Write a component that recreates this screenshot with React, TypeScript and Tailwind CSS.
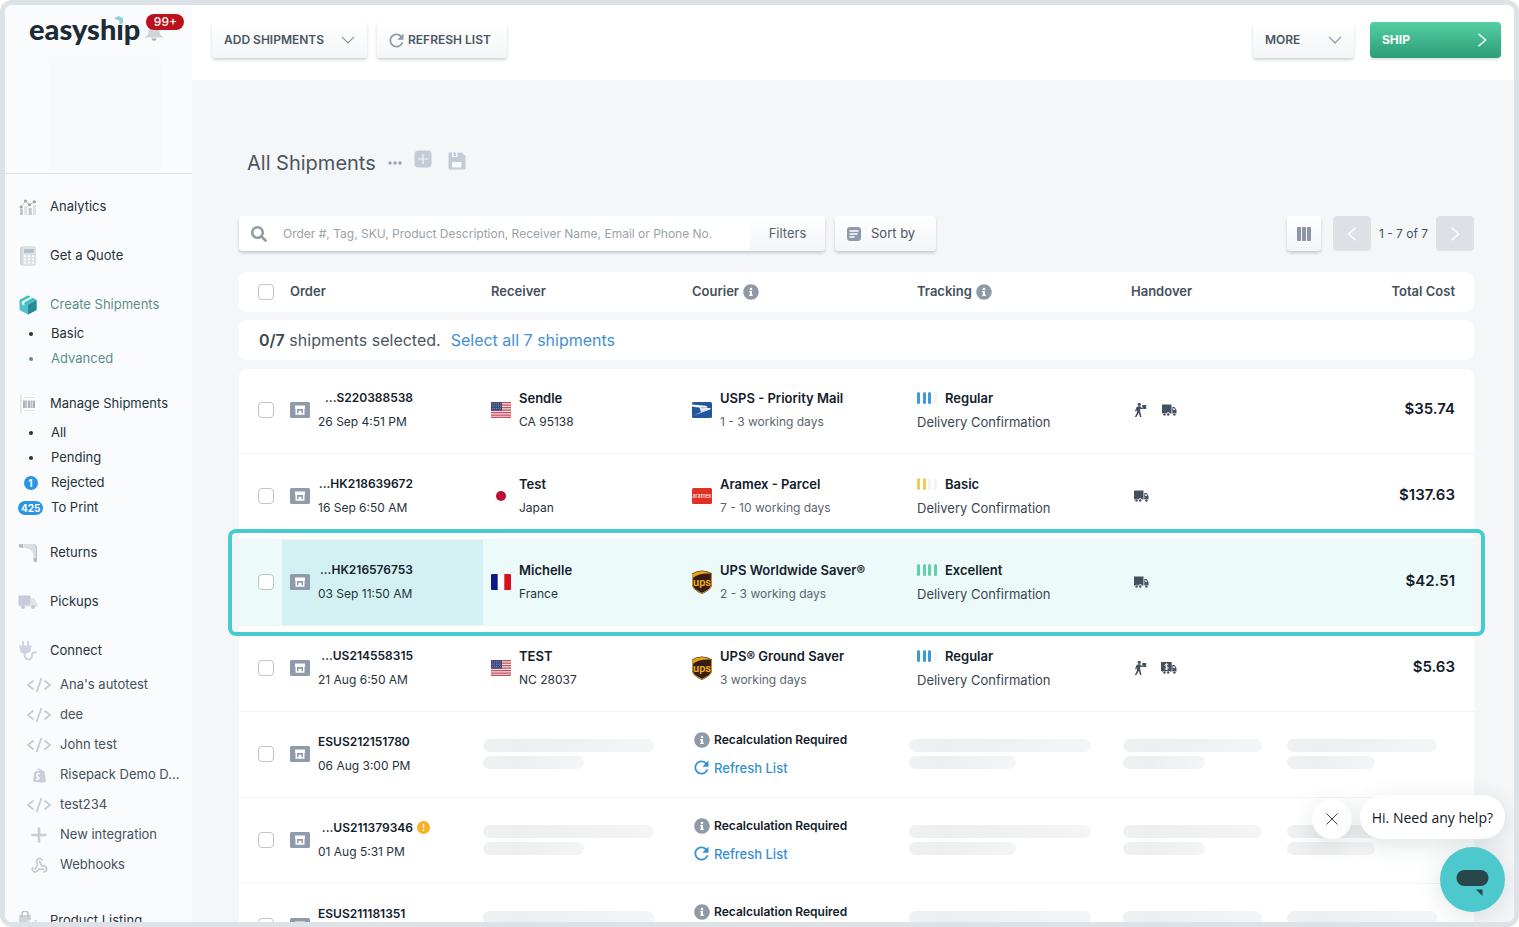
import type { ReactNode } from "react";
import { Webhook } from "lucide-react";
import { FaInfoCircle, FaSearch, FaShopify } from "react-icons/fa";
import { MdRefresh } from "react-icons/md";

type NavChild = {
  label: string;
  count?: string;
  active?: boolean;
};

type Shipment = {
  id: string;
  date?: string;
  warning?: boolean;
  highlighted?: boolean;
  details?: {
    name: string;
    place: string;
    flag: ReactNode;
    courier: string;
    days: string;
    logo: ReactNode;
    level: "Regular" | "Basic" | "Excellent";
    handover: ("dropoff" | "pickup" | "paid")[];
    cost: string;
  };
};

const shipments: Shipment[] = [
  {
    id: "...S220388538",
    date: "26 Sep 4:51 PM",
    details: {
      name: "Sendle",
      place: "CA 95138",
      flag: <UsFlag />,
      courier: "USPS - Priority Mail",
      days: "1 - 3 working days",
      logo: <UspsLogo />,
      level: "Regular",
      handover: ["dropoff", "pickup"],
      cost: "$35.74",
    },
  },
  {
    id: "...HK218639672",
    date: "16 Sep 6:50 AM",
    details: {
      name: "Test",
      place: "Japan",
      flag: <JapanFlag />,
      courier: "Aramex - Parcel",
      days: "7 - 10 working days",
      logo: <AramexLogo />,
      level: "Basic",
      handover: ["pickup"],
      cost: "$137.63",
    },
  },
  {
    id: "...HK216576753",
    date: "03 Sep 11:50 AM",
    highlighted: true,
    details: {
      name: "Michelle",
      place: "France",
      flag: <FranceFlag />,
      courier: "UPS Worldwide Saver®",
      days: "2 - 3 working days",
      logo: <UpsLogo />,
      level: "Excellent",
      handover: ["pickup"],
      cost: "$42.51",
    },
  },
  {
    id: "...US214558315",
    date: "21 Aug 6:50 AM",
    details: {
      name: "TEST",
      place: "NC 28037",
      flag: <UsFlag />,
      courier: "UPS® Ground Saver",
      days: "3 working days",
      logo: <UpsLogo />,
      level: "Regular",
      handover: ["dropoff", "paid"],
      cost: "$5.63",
    },
  },
  { id: "ESUS212151780", date: "06 Aug 3:00 PM" },
  { id: "...US211379346", date: "01 Aug 5:31 PM", warning: true },
  { id: "ESUS211181351" },
];

const createItems: NavChild[] = [
  { label: "Basic" },
  { label: "Advanced", active: true },
];

const manageItems: NavChild[] = [
  { label: "All" },
  { label: "Pending" },
  { label: "Rejected", count: "1" },
  { label: "To Print", count: "425" },
];

const integrations = [
  { label: "Ana's autotest", icon: <CodeIcon /> },
  { label: "dee", icon: <CodeIcon /> },
  { label: "John test", icon: <CodeIcon /> },
  { label: "Risepack Demo D...", icon: <FaShopify className="size-[15px]" /> },
  { label: "test234", icon: <CodeIcon /> },
  { label: "New integration", icon: <PlusIcon /> },
  { label: "Webhooks", icon: <Webhook size={17} strokeWidth={2.5} /> },
];

const buttonStyle =
  "flex items-center rounded bg-linear-to-b from-white to-[#f3f5f7] text-[#4b5661] shadow-[0_2px_3px_rgba(60,80,100,0.25)] cursor-pointer";

export default function App() {
  return (
    <div className="relative flex h-screen overflow-hidden rounded-xl border-[5px] border-[#dde2e7] bg-[#f4f6f8] font-['Inter','Liberation_Sans',sans-serif] text-[13px] text-[#26323c]">
      <Sidebar />
      <div className="flex min-w-0 flex-1 flex-col">
        <TopBar />
        <main className="min-h-0 flex-1 overflow-hidden pt-[67px] pr-10 pl-[47px]">
          <div className="flex h-8 items-center pl-2">
            <h1 className="text-[20px] text-[#4b5661]">All Shipments</h1>
            <button aria-label="View options" className="ml-3 cursor-pointer">
              <DotsIcon />
            </button>
            <button aria-label="Add view" className="mb-2 ml-3 cursor-pointer">
              <AddViewIcon />
            </button>
            <button aria-label="Save view" className="mb-1 ml-4 cursor-pointer">
              <SaveIcon />
            </button>
          </div>
          <Toolbar />
          <ShipmentTable />
        </main>
      </div>
      <ChatWidget />
    </div>
  );
}

function Sidebar() {
  return (
    <aside className="w-[187px] shrink-0 overflow-hidden bg-[#f9fbfc]">
      <div className="h-[169px] border-b border-[#dde2e7] pt-2">
        <div className="flex h-9 pl-6">
          <a
            href="#home"
            className="relative font-['Lato',sans-serif] text-[29px] leading-8 font-black text-[#1c2b36]"
          >
            easyship
            <svg
              viewBox="0 0 11 10"
              className="absolute top-0.5 right-4 h-2.5 w-[11px]"
            >
              <path d="M1 0h10v9H1z" fill="#f9fbfc" />
              <path d="M1 3.500l4.500-2.500L10 3v5L6.500 9.500V5.800z" fill="#8fd3d6" />
            </svg>
          </a>
          <button
            aria-label="Notifications"
            className="relative ml-1.5 h-8 w-10 cursor-pointer"
          >
            <svg
              viewBox="0 0 20 16"
              className="absolute bottom-1 -left-0.5 h-4 w-5"
              fill="#cfd4da"
            >
              <path d="M10 0C6 0 4.500 3 4.500 6.500 4.500 9.500 3 11 0 12.500h20c-3-1.500-4.500-3-4.500-6C15.500 3 14 0 10 0z" />
              <path d="M7.500 13.500h5a2.500 2.200 0 01-5 0z" fill="#a4adb6" />
            </svg>
            <span className="absolute top-px left-0 h-4 w-[38px] rounded-full bg-[#bb111a] text-center text-[12px] leading-4 font-medium text-white">
              99+
            </span>
          </button>
        </div>
        <div className="mt-2 ml-11 h-[116px] w-28 bg-[#f8f9fa]" />
      </div>

      <nav className="pt-4">
        <NavGroup label="Analytics" icon={<AnalyticsIcon />} />
        <NavGroup label="Get a Quote" icon={<CalculatorIcon />} />
        <NavGroup
          label="Create Shipments"
          icon={<BoxIcon />}
          items={createItems}
          active
        />
        <NavGroup
          label="Manage Shipments"
          icon={<BarcodeIcon />}
          items={manageItems}
        />
        <NavGroup label="Returns" icon={<ReturnIcon />} />
        <NavGroup label="Pickups" icon={<PickupIcon />} />
        <NavGroup label="Connect" icon={<PlugIcon />}>
          <ul className="pt-[3px] pb-2">
            {integrations.map((item) => (
              <li key={item.label}>
                <a
                  href="#integration"
                  className="flex h-[30px] items-center gap-2 pl-[21px] whitespace-nowrap text-[#45515c]"
                >
                  <span className="flex w-[26px] justify-center text-[#c5ccd5]">
                    {item.icon}
                  </span>
                  {item.label}
                </a>
              </li>
            ))}
          </ul>
        </NavGroup>
        <NavGroup label="Product Listing" icon={<ListingIcon />} />
      </nav>
    </aside>
  );
}

function NavGroup({
  label,
  icon,
  items = [],
  active = false,
  children,
}: {
  label: string;
  icon: ReactNode;
  items?: NavChild[];
  active?: boolean;
  children?: ReactNode;
}) {
  return (
    <div className="mb-4">
      <a
        href="#section"
        className={`flex h-[33px] items-center gap-3 pl-[13px] whitespace-nowrap ${
          active ? "text-[#5a8f8f]" : ""
        }`}
      >
        <span className="flex w-5 justify-center">{icon}</span>
        {label}
      </a>
      {items.length > 0 && (
        <ul>
          {items.map((item) => (
            <li key={item.label}>
              <a
                href="#subsection"
                className={`flex h-[25px] items-center gap-2 pl-[13px] whitespace-nowrap ${
                  item.active ? "text-[#5a8f8f]" : ""
                }`}
              >
                <span className="flex w-[25px] justify-center">
                  {item.count ? (
                    <span className="min-w-3.5 rounded-full bg-[#2b95e0] px-[3px] text-center text-[10px] leading-[14px] font-bold text-white">
                      {item.count}
                    </span>
                  ) : (
                    <span className="size-1 rounded-full bg-current" />
                  )}
                </span>
                {item.label}
              </a>
            </li>
          ))}
        </ul>
      )}
      {children}
    </div>
  );
}

function TopBar() {
  return (
    <header className="flex h-[75px] shrink-0 items-start bg-white pt-[17px] pr-[13px] pl-5 text-[12px] font-semibold whitespace-nowrap">
      <button className={`${buttonStyle} h-9 w-[155px] justify-between px-3`}>
        ADD SHIPMENTS
        <ChevronDown />
      </button>
      <button className={`${buttonStyle} ml-2.5 h-9 w-[130px] gap-px pl-[9px]`}>
        <MdRefresh className="size-[21px] text-[#919ca7]" />
        REFRESH LIST
      </button>
      <button
        className={`${buttonStyle} ml-auto h-9 w-[101px] justify-between px-3`}
      >
        MORE
        <ChevronDown />
      </button>
      <button className="ml-4 flex h-9 w-[131px] cursor-pointer items-center justify-between rounded bg-linear-to-b from-[#54cfa2] to-[#2b9d77] px-3 font-bold text-white shadow-[0_2px_2px_rgba(60,80,100,0.15)]">
        SHIP
        <ChevronSide direction="right" />
      </button>
    </header>
  );
}

function Toolbar() {
  return (
    <div className="mt-[37px] flex items-center whitespace-nowrap">
      <div className="flex h-[35px] max-w-[586px] flex-1 items-center overflow-hidden rounded bg-white shadow-[0_2px_3px_rgba(60,80,100,0.25)]">
        <FaSearch className="ml-3 size-4 shrink-0 text-[#929ca4]" />
        <input
          type="text"
          aria-label="Search shipments"
          placeholder="Order #, Tag, SKU, Product Description, Receiver Name, Email or Phone No."
          className="ml-4 h-full min-w-0 flex-1 text-[12px] outline-none placeholder:text-[#98a3aa]"
        />
        <button className="h-full w-[75px] cursor-pointer bg-linear-to-b from-white to-[#f3f5f7] text-[#56616c]">
          Filters
        </button>
      </div>
      <button className={`${buttonStyle} ml-2.5 h-[35px] w-[101px] gap-2.5 pl-3`}>
        <SortIcon />
        Sort by
      </button>
      <button
        aria-label="Columns"
        className={`${buttonStyle} ml-auto h-[35px] w-[34px] justify-center`}
      >
        <ColumnsIcon />
      </button>
      <button
        aria-label="Previous page"
        className="ml-3 flex h-[35px] w-[38px] items-center justify-center rounded bg-[#dde1e6] text-white"
      >
        <ChevronSide direction="left" />
      </button>
      <span className="mx-2 text-[12px] text-[#45515c]">1 - 7 of 7</span>
      <button
        aria-label="Next page"
        className="flex h-[35px] w-[38px] items-center justify-center rounded bg-[#dde1e6] text-white"
      >
        <ChevronSide direction="right" />
      </button>
    </div>
  );
}

function ShipmentTable() {
  return (
    <table className="mt-[21px] w-full table-fixed border-separate border-spacing-0 text-left whitespace-nowrap">
      <colgroup>
        <col className="w-[43px]" />
        <col className="w-[201px]" />
        <col className="w-[201px]" />
        <col className="w-[225px]" />
        <col className="w-[214px]" />
        <col className="w-[164px]" />
        <col className="w-[187px]" />
      </colgroup>
      <thead>
        <tr className="h-10 bg-white text-[#45515c] [&>th]:px-2 [&>th]:font-semibold">
          <td className="rounded-l-lg pl-[19px]">
            <Checkbox label="Select every shipment on this page" />
          </td>
          <th>Order</th>
          <th>Receiver</th>
          <th>
            <span className="flex items-center gap-1">
              Courier <FaInfoCircle className="size-4 text-[#8f9aa6]" />
            </span>
          </th>
          <th>
            <span className="flex items-center gap-1">
              Tracking <FaInfoCircle className="size-4 text-[#8f9aa6]" />
            </span>
          </th>
          <th>Handover</th>
          <th className="rounded-r-lg text-right">
            <span className="pr-[11px]">Total Cost</span>
          </th>
        </tr>
      </thead>
      <tbody>
        <tr className="h-2">
          <td colSpan={7} />
        </tr>
        <tr className="h-10">
          <td
            colSpan={7}
            className="rounded-lg bg-white pl-5 text-[16px] text-[#4b5661]"
          >
            <b className="font-semibold text-[#3b4650]">0/7</b> shipments
            selected.
            <a href="#select-all" className="ml-2.5 text-[#4291cf]">
              Select all 7 shipments
            </a>
          </td>
        </tr>
        <tr className="h-[9px]">
          <td colSpan={7} />
        </tr>
      </tbody>
      <tbody className="[&>tr:first-child]:h-[85px] [&>tr:first-child>td:first-child]:rounded-tl-lg [&>tr:first-child>td:last-child]:rounded-tr-lg">
        {shipments.map((shipment) => (
          <ShipmentRow key={shipment.id} shipment={shipment} />
        ))}
      </tbody>
    </table>
  );
}

function ShipmentRow({ shipment }: { shipment: Shipment }) {
  const { details, highlighted } = shipment;
  const shortened = shipment.id.startsWith("...");

  return (
    <tr
      className={`h-[86px] leading-6 [&>td]:border-b [&>td]:border-[#f1f3f5] [&>td]:pb-0.5 ${
        highlighted ? "relative bg-[#ecfafa]" : "[&>td]:bg-white"
      }`}
    >
      <td className="pl-[19px]">
        <Checkbox label={`Select ${shipment.id}`} />
      </td>
      <td className={`pl-2 ${highlighted ? "bg-[#d3f1f2]" : ""}`}>
        <div className="flex items-center gap-2 text-[12px] leading-6">
          <StoreIcon />
          <div>
            <div className="flex items-center gap-1">
              <span
                className={`w-[95px] font-semibold text-[#12202b] ${
                  shortened ? "text-right" : ""
                }`}
              >
                {shipment.id}
              </span>
              {shipment.warning && <WarningIcon />}
            </div>
            <div className="h-6">{shipment.date}</div>
          </div>
        </div>
      </td>
      {details ? (
        <>
          <td className="px-2">
            <div className="flex items-center gap-2">
              {details.flag}
              <div>
                <div className="font-semibold text-[#12202b]">
                  {details.name}
                </div>
                <div className="text-[12px] leading-6">{details.place}</div>
              </div>
            </div>
          </td>
          <td className="px-2">
            <div className="flex items-center gap-2">
              {details.logo}
              <div>
                <div className="font-semibold text-[#12202b]">
                  {details.courier}
                </div>
                <div className="text-[12px] leading-6 text-[#5b6670]">
                  {details.days}
                </div>
              </div>
            </div>
          </td>
          <td className="px-2">
            <div className="flex items-center gap-2 font-semibold text-[#12202b]">
              <LevelBars level={details.level} />
              {details.level}
            </div>
            <div className="text-[#3b4650]">Delivery Confirmation</div>
          </td>
          <td className="px-2">
            <div className="flex items-center gap-2">
              {details.handover.map((kind) => (
                <HandoverIcon key={kind} kind={kind} />
              ))}
            </div>
          </td>
          <td className="pr-[19px] text-right text-[15px] font-semibold text-[#12202b]">
            <div className="pb-0.5">{details.cost}</div>
            {highlighted && (
              <span className="pointer-events-none absolute -top-[11px] -right-[11px] -bottom-2.5 -left-[11px] rounded-lg border-4 border-[#45cbd0]" />
            )}
          </td>
        </>
      ) : (
        <>
          <td>
            <Skeleton />
          </td>
          <td className="pl-2.5">
            <div className="flex h-7 items-center gap-1 text-[12px] font-semibold text-[#12202b]">
              <FaInfoCircle className="size-4 text-[#8f9aa6]" />
              Recalculation Required
            </div>
            <button className="flex h-7 cursor-pointer items-center gap-0.5 font-medium text-[#3590d2]">
              <MdRefresh className="-ml-[3px] size-[21px]" />
              Refresh List
            </button>
          </td>
          <td>
            <Skeleton />
          </td>
          <td>
            <Skeleton />
          </td>
          <td className="pr-[11px]">
            <Skeleton />
          </td>
        </>
      )}
    </tr>
  );
}

function Checkbox({ label }: { label: string }) {
  return (
    <input
      type="checkbox"
      aria-label={label}
      className="block size-4 cursor-pointer appearance-none rounded border border-[#bcc2c8] bg-white checked:bg-[#45cbd0]"
    />
  );
}

function Skeleton() {
  return (
    <div className="space-y-1">
      <div className="h-[13px] w-[85%] rounded-full bg-linear-to-r from-[#f0f1f2] via-[#edeeef] via-20% to-[#f4f5f7]" />
      <div className="h-[13px] w-1/2 rounded-full bg-linear-to-r from-[#f0f1f2] via-[#edeeef] via-30% to-[#f4f5f7]" />
    </div>
  );
}

function LevelBars({ level }: { level: "Regular" | "Basic" | "Excellent" }) {
  const filled = { Basic: 2, Regular: 3, Excellent: 4 }[level];
  const color = {
    Basic: "bg-[#f5c955]",
    Regular: "bg-[#3b9ade]",
    Excellent: "bg-[#62cfa6]",
  }[level];

  return (
    <span className="flex w-5 justify-between">
      {[0, 1, 2, 3].map((i) => (
        <span
          key={i}
          className={`h-3 w-[3px] rounded-sm ${
            i < filled ? color : "bg-[#f3f4f6]"
          }`}
        />
      ))}
    </span>
  );
}

function HandoverIcon({ kind }: { kind: "dropoff" | "pickup" | "paid" }) {
  if (kind === "dropoff") {
    return (
      <svg viewBox="0 0 20 16" className="h-4 w-5" fill="#44505d">
        <circle cx="8.300" cy="2.300" r="1.600" />
        <path d="M7 4.200h2.200l1.300 1.500H12v1.300h-2.200l-.6-.5v3l1.300 5.500H9L7.800 10.800 6.600 13l-1.200 2H3.800L5.800 11 6 7.500 5.200 9.300H4L5.300 5.500z" />
        <path d="M11.200 3h4v4h-3v-1.500h-1z" />
      </svg>
    );
  }

  return (
    <svg viewBox="0 0 20 16" className="h-4 w-5">
      <path
        d="M3 2.500h9.500v9H11a2 2 0 00-3.600 0h-.6a2 2 0 00-2.800 0H3z"
        fill="#44505d"
      />
      <path
        d="M13.300 5h2.200l2 3v3.500h-.8a1.500 1.500 0 00-2.600 0h-.8zM14.300 6v2h2l-1.300-2z"
        fill="#44505d"
        fillRule="evenodd"
      />
      <circle cx="5.500" cy="12.500" r="1.200" fill="#44505d" />
      <circle cx="9.200" cy="12.500" r="1.200" fill="#44505d" />
      <circle cx="15.400" cy="12.500" r="1.200" fill="#44505d" />
      {kind === "paid" && (
        <>
          <path d="M2 2h10.500v9H2z" fill="#44505d" />
          <path
            d="M9.200 4.700C8.300 4 5.900 4.100 5.900 5.500s3.400 1 3.400 2.400-2.500 1.600-3.600.8M7.600 3v7"
            stroke="#fff"
            strokeWidth="1"
            fill="none"
          />
        </>
      )}
    </svg>
  );
}

function ChatWidget() {
  return (
    <div className="absolute right-[9px] bottom-2.5 flex flex-col items-end gap-2">
      <div className="flex items-end gap-2">
        <button
          aria-label="Dismiss message"
          className="flex size-10 cursor-pointer items-center justify-center rounded-full bg-white shadow-[0_6px_24px_rgba(40,70,70,0.14)]"
        >
          <svg viewBox="0 0 12 12" className="size-3" stroke="#3b4650" fill="none">
            <path d="M.5.5l11 11M11.500.5L.5 11.500" />
          </svg>
        </button>
        <button className="h-11 cursor-pointer rounded-[22px] bg-white px-3 font-['Open_Sans',sans-serif] text-[14px] text-[#111827] shadow-[0_6px_24px_rgba(40,70,70,0.14)]">
          Hi. Need any help?
        </button>
      </div>
      <button
        aria-label="Open chat"
        className="flex size-[65px] cursor-pointer items-center justify-center rounded-full bg-[#4dc9cd] shadow-[0_4px_24px_rgba(40,70,70,0.14)]"
      >
        <svg viewBox="0 0 34 20" className="h-5 w-[34px] overflow-visible" fill="#27474a">
          <rect x="0.500" y="0" width="32" height="16" rx="8" />
          <path d="M20 19.500h6.500V26z" />
        </svg>
      </button>
    </div>
  );
}

function ChevronDown() {
  return (
    <svg
      viewBox="0 0 14 8"
      className="h-2 w-3.5"
      fill="none"
      stroke="#8793a0"
      strokeWidth="1.200"
    >
      <path d="M1 .8l6 6 6-6" />
    </svg>
  );
}

function ChevronSide({ direction }: { direction: "left" | "right" }) {
  return (
    <svg
      viewBox="0 0 14 14"
      className="size-3.5"
      fill="none"
      stroke="currentColor"
      strokeWidth="1.500"
    >
      <path d={direction === "left" ? "M10.500.8L3.500 7l7 6.200" : "M3.500.8l7 6.200-7 6.200"} />
    </svg>
  );
}

function DotsIcon() {
  return (
    <svg viewBox="0 0 14 4" className="h-1 w-3.5" fill="#98a2ac">
      <circle cx="2" cy="2" r="1.700" />
      <circle cx="7" cy="2" r="1.700" />
      <circle cx="12" cy="2" r="1.700" />
    </svg>
  );
}

function AddViewIcon() {
  return (
    <svg viewBox="0 0 18 18" className="size-[18px]">
      <rect x=".5" y=".5" width="17" height="17" rx="4" fill="#c3cbd5" />
      <path d="M9 4v10M4 9h10" stroke="#f4f6f8" strokeWidth="1.200" />
    </svg>
  );
}

function SaveIcon() {
  return (
    <svg viewBox="0 0 18 18" className="size-[18px]">
      <path
        d="M1.500.5H4V5h7V.5h2.500l4 3.500v12.500a1 1 0 01-1 1h-15a1 1 0 01-1-1v-15z"
        fill="#c3cbd5"
      />
      <path d="M5.500.5h2.500V4H5.500zM9.500.5H11V5H9.500z" fill="#c3cbd5" />
      <rect x="4" y="10" width="9.500" height="5.500" rx=".8" fill="#f8fafb" />
    </svg>
  );
}

function SortIcon() {
  return (
    <svg viewBox="0 0 14 14" className="size-3.5">
      <rect width="14" height="14" rx="3" fill="#8f9bab" />
      <path
        d="M2.500 4h9M2.500 7h8M2.500 10h5"
        stroke="#fff"
        strokeWidth="1.300"
      />
    </svg>
  );
}

function ColumnsIcon() {
  return (
    <svg viewBox="0 0 14 14" className="size-3.5" fill="#8b97a4">
      <rect width="4" height="14" rx=".8" />
      <rect x="5" width="4" height="14" rx=".8" />
      <rect x="10" width="4" height="14" rx=".8" />
    </svg>
  );
}

function StoreIcon() {
  return (
    <svg viewBox="0 0 20 16" className="h-4 w-5 shrink-0">
      <rect width="20" height="16" rx="1.500" fill="#8f9aaa" />
      <path
        d="M5 3.500h10v3.200h-.5v6h-9v-6H5zM7 7v4.300h1.500V8.700h3v2.600H13V7z"
        fill="#fff"
        fillRule="evenodd"
      />
    </svg>
  );
}

function WarningIcon() {
  return (
    <svg viewBox="0 0 14 14" className="size-[13px]">
      <circle cx="7" cy="7" r="7" fill="#f4b323" />
      <path d="M7 3v4.500M7 9v1.700" stroke="#fff" strokeWidth="1.500" />
    </svg>
  );
}

function UsFlag() {
  return (
    <svg viewBox="0 0 20 16" className="h-4 w-5 shrink-0">
      <rect width="20" height="16" rx="1" fill="#f1dfe2" />
      <path
        d="M0 .6h20M0 3.100h20M0 5.600h20M0 8.100h20M0 10.600h20M0 13.100h20M0 15.400h20"
        stroke="#c5505d"
        strokeWidth="1.200"
      />
      <rect width="11" height="8.700" fill="#40497a" />
      <path
        d="M1 1.800h9M1 4.200h9M1 6.600h9"
        stroke="#a9aec8"
        strokeWidth=".7"
        strokeDasharray="1 1"
      />
    </svg>
  );
}

function JapanFlag() {
  return (
    <svg viewBox="0 0 20 16" className="h-4 w-5 shrink-0">
      <rect width="20" height="16" fill="#fff" />
      <circle cx="10" cy="8" r="5" fill="#bc0b35" />
    </svg>
  );
}

function FranceFlag() {
  return (
    <svg viewBox="0 0 20 16" className="h-4 w-5 shrink-0">
      <rect width="20" height="16" rx="1" fill="#fff" />
      <path d="M1 0h5.700v16H1a1 1 0 01-1-1V1a1 1 0 011-1z" fill="#0b1a86" />
      <path d="M13.300 0H19a1 1 0 011 1v14a1 1 0 01-1 1h-5.700z" fill="#d90f1d" />
    </svg>
  );
}

function UspsLogo() {
  return (
    <svg viewBox="0 0 20 16" className="h-4 w-5 shrink-0">
      <rect width="20" height="16" rx="1.500" fill="#23569b" />
      <path d="M0 2.500l13 1.300c3 .4 2.800 1.700 1.500 1.900L4 5.300 0 4.500z" fill="#fff" />
      <path
        d="M9 6h8.500c1.200 0 1.500.7.5 1.500L1 13.800 14 7.700z"
        fill="#e9eff7"
      />
      <path d="M7 4.500l8 3.500-6 2z" fill="#dbe6f3" />
    </svg>
  );
}

function AramexLogo() {
  return (
    <svg viewBox="0 0 20 16" className="h-4 w-5 shrink-0">
      <rect width="20" height="16" rx="1.500" fill="#e13126" />
      <text
        x="10"
        y="9.500"
        textAnchor="middle"
        fontSize="5.500"
        fontFamily="Inter, sans-serif"
        fill="#fff"
      >
        aramex
      </text>
    </svg>
  );
}

function UpsLogo() {
  return (
    <svg viewBox="0 0 20 24" className="h-6 w-5 shrink-0">
      <path
        d="M0 3.500Q10-2.500 20 3.500V14c0 5-4.500 7-10 10C4.500 21 0 19 0 14z"
        fill="#351c15"
      />
      <path d="M.6 5V3.800Q10-2 19.400 3.800 8 2.700 .6 8z" fill="#e8a21a" />
      <path
        d="M.6 4v10c0 4.700 4.300 6.500 9.400 9.300 5.100-2.800 9.400-4.600 9.400-9.300V4"
        stroke="#d99a1f"
        strokeWidth="1"
        fill="none"
      />
      <text
        x="10"
        y="15.500"
        textAnchor="middle"
        fontSize="11"
        fontWeight="600"
        fontFamily="Roboto, sans-serif"
        fill="#f4ad1c"
      >
        ups
      </text>
    </svg>
  );
}

function CodeIcon() {
  return (
    <svg
      viewBox="0 0 26 16"
      className="h-4 w-[26px]"
      fill="none"
      stroke="currentColor"
      strokeWidth="1.800"
    >
      <path d="M7.500 3.500L2 8l5.500 4.500M18.500 3.500L24 8l-5.500 4.500M15.500 1l-5 14" />
    </svg>
  );
}

function PlusIcon() {
  return (
    <svg
      viewBox="0 0 16 16"
      className="size-4"
      stroke="currentColor"
      strokeWidth="2.600"
    >
      <path d="M8 .5v15M.5 8h15" />
    </svg>
  );
}

function AnalyticsIcon() {
  return (
    <svg viewBox="0 0 18 18" className="size-[18px]">
      <path d="M1 11h3v6H1zM9.700 10h3v7h-3z" fill="#bfc6ce" />
      <path d="M5.300 8h3v9h-3zM14 7h3v10h-3z" fill="#dde1e5" />
      <path d="M2 9l4.500-6 4 4 5-3.500" stroke="#c3c9d0" fill="none" />
      <circle cx="2.200" cy="9" r="1.500" fill="#979fa8" />
      <circle cx="6.500" cy="3" r="1.500" fill="#979fa8" />
      <circle cx="10.500" cy="6.800" r="1.500" fill="#979fa8" />
      <circle cx="15.300" cy="3.800" r="1.600" fill="#979fa8" />
    </svg>
  );
}

function CalculatorIcon() {
  return (
    <svg viewBox="0 0 18 20" className="h-5 w-[18px]">
      <rect x="1" y=".5" width="16" height="19" rx="2" fill="#cdd3da" />
      <rect x="3" y=".5" width="14" height="19" rx="2" fill="#dce1e6" />
      <rect x="5" y="3" width="10" height="4" fill="#b7bfc9" />
      <path
        d="M5 10.200h10M5 13.400h10M5 16.600h10"
        stroke="#fff"
        strokeWidth="1.800"
        strokeDasharray="2 2"
      />
    </svg>
  );
}

function BoxIcon() {
  return (
    <svg viewBox="0 0 20 20" className="size-5 shrink-0">
      <path d="M10 .5l8.500 4.500v10L10 19.500 1.500 15V5z" fill="#4fc3c8" />
      <path d="M10 9.800L18.500 5v10L10 19.500z" fill="#2b8a94" />
      <path d="M10 .5L18.500 5 10 9.800 1.500 5z" fill="#45bdc2" />
      <path d="M4 6.400l8.500-4.600 2 1L6.300 7.600v3L4 9.300z" fill="#f2fbfb" />
    </svg>
  );
}

function BarcodeIcon() {
  return (
    <svg viewBox="0 0 18 20" className="h-5 w-[18px]">
      <rect x="1" y=".5" width="16" height="19" rx="2" fill="#dfe3e7" />
      <rect x="2.500" y=".5" width="15" height="19" rx="2" fill="#fdfdfe" />
      <path d="M4.500 3.500h11M4.500 16.500h11" stroke="#e0e4e8" />
      <path d="M5 6.500v7.500M10 6.500v7.500M15 6.500v7.500" stroke="#8d98a5" strokeWidth="1.500" />
      <path d="M7.200 6.500v7.500M12.500 6.500v7.500" stroke="#b4bcc6" strokeWidth="2" />
    </svg>
  );
}

function ReturnIcon() {
  return (
    <svg viewBox="0 0 20 20" className="size-5 shrink-0">
      <path
        d="M2 1h12.500C17.500 1 19 2.500 19 5.500V17c0 3-3.500 3-3.500 0 0-6-.5-9-3.500-10.500C9.500 5.200 6 4.800 2 4.500.2 4 .2 1.300 2 1z"
        fill="#dadfe3"
      />
      <path d="M2 1h3v3.700H2C.2 4 .2 1.300 2 1zM15.500 15H19v2c0 3-3.500 3-3.500 0z" fill="#b7bec6" />
      <path d="M14.500 1c3 0 4.500 1.500 4.500 4.500V15h-1V6c0-3-1-4.500-3.500-5z" fill="#b7bec6" />
    </svg>
  );
}

function PickupIcon() {
  return (
    <svg viewBox="0 0 20 16" className="h-4 w-5 shrink-0">
      <path d="M.5 1.500h12v9.500H.5z" fill="#c5ccd6" />
      <path d="M13 4h3.500l1.500 4 1.500 1v3.500H13z" fill="#e1e5e9" />
      <path d="M.5 11h19v1.500H.5z" fill="#dde1e6" />
      <circle cx="5" cy="13" r="2" fill="#c3cad3" />
      <circle cx="15" cy="13" r="2" fill="#c3cad3" />
    </svg>
  );
}

function PlugIcon() {
  return (
    <svg viewBox="0 0 20 20" className="size-5 shrink-0">
      <path d="M5 0v5M10 0v5" stroke="#ced4db" strokeWidth="1.800" />
      <path d="M1 4.500h12.500l-.8 5c-.5 3-9 4.500-10.200 1z" fill="#ced4db" />
      <path
        d="M6.500 12c0 9 7.500 7.500 7.500 2.500 0-3 2-3.500 4.500-3"
        stroke="#ced4db"
        strokeWidth="2"
        fill="none"
      />
    </svg>
  );
}

function ListingIcon() {
  return (
    <svg viewBox="0 0 20 20" className="size-5 shrink-0">
      <path d="M1 4h12v13H1z" fill="#ced4db" />
      <path d="M4 6V3a3 3 0 016 0v3" stroke="#b7bfc9" strokeWidth="1.500" fill="none" />
      <path d="M9 9h10v9H9z" fill="#dde2e7" />
      <path d="M12 9v3h4V9z" fill="#fff" />
    </svg>
  );
}
